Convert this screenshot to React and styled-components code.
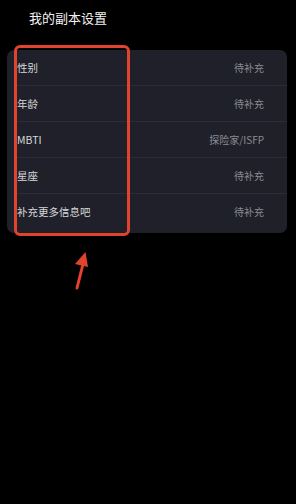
import React from "react";
import styled, { createGlobalStyle } from "styled-components";

const Global = createGlobalStyle`
  html, body { margin: 0; padding: 0; background: #000; }
  body { font-family: "Noto Sans CJK SC", "Noto Sans", sans-serif; -webkit-font-smoothing: antialiased; }
`;

const Page = styled.div`
  position: relative;
  width: 296px;
  height: 504px;
  background: #000;
  overflow: hidden;
`;

const Title = styled.div`
  padding: 9px 0 0 29px;
  height: 50px;
  box-sizing: border-box;
  color: #f2f2f2;
  font-size: 13px;
  line-height: 18px;
`;

const Card = styled.div`
  margin: 0 9px 0 7px;
  background: #1f2029;
  border-radius: 7px;
  padding-bottom: 4px;
`;

const Row = styled.div`
  display: flex;
  align-items: center;
  justify-content: space-between;
  height: 35px;
  margin-left: 10px;
  padding-right: 23px;
  border-bottom: ${(p) => (p.$last ? "none" : "1px solid #2c2d37")};
  font-size: 10.5px;
`;

const Label = styled.span`
  color: #d6d7db;
`;

const Value = styled.span`
  color: #8b8c93;
  font-size: 10px;
`;

const Highlight = styled.div`
  position: absolute;
  left: 14px;
  top: 45px;
  width: 116px;
  height: 191px;
  box-sizing: border-box;
  border: 3px solid #e2432d;
  border-radius: 6px;
  pointer-events: none;
`;

const Arrow = styled.svg`
  position: absolute;
  left: 68px;
  top: 246px;
`;

const rows = [
  ["性别", "待补充"],
  ["年龄", "待补充"],
  ["MBTI", "探险家/ISFP"],
  ["星座", "待补充"],
  ["补充更多信息吧", "待补充"],
];

export default function App() {
  return (
    <Page>
      <Global />
      <Title>我的副本设置</Title>
      <Card>
        {rows.map(([l, v], i) => (
          <Row key={l} $last={i === rows.length - 1}>
            <Label>{l}</Label>
            <Value>{v}</Value>
          </Row>
        ))}
      </Card>
      <Highlight />
      <Arrow width="28" height="48" viewBox="0 0 28 48">
        <path d="M9 42 L16 14" stroke="#e2432d" strokeWidth="3" strokeLinecap="round" fill="none" />
        <path d="M17.5 6 L7 18 L20 21 Z" fill="#e2432d" />
      </Arrow>
    </Page>
  );
}
